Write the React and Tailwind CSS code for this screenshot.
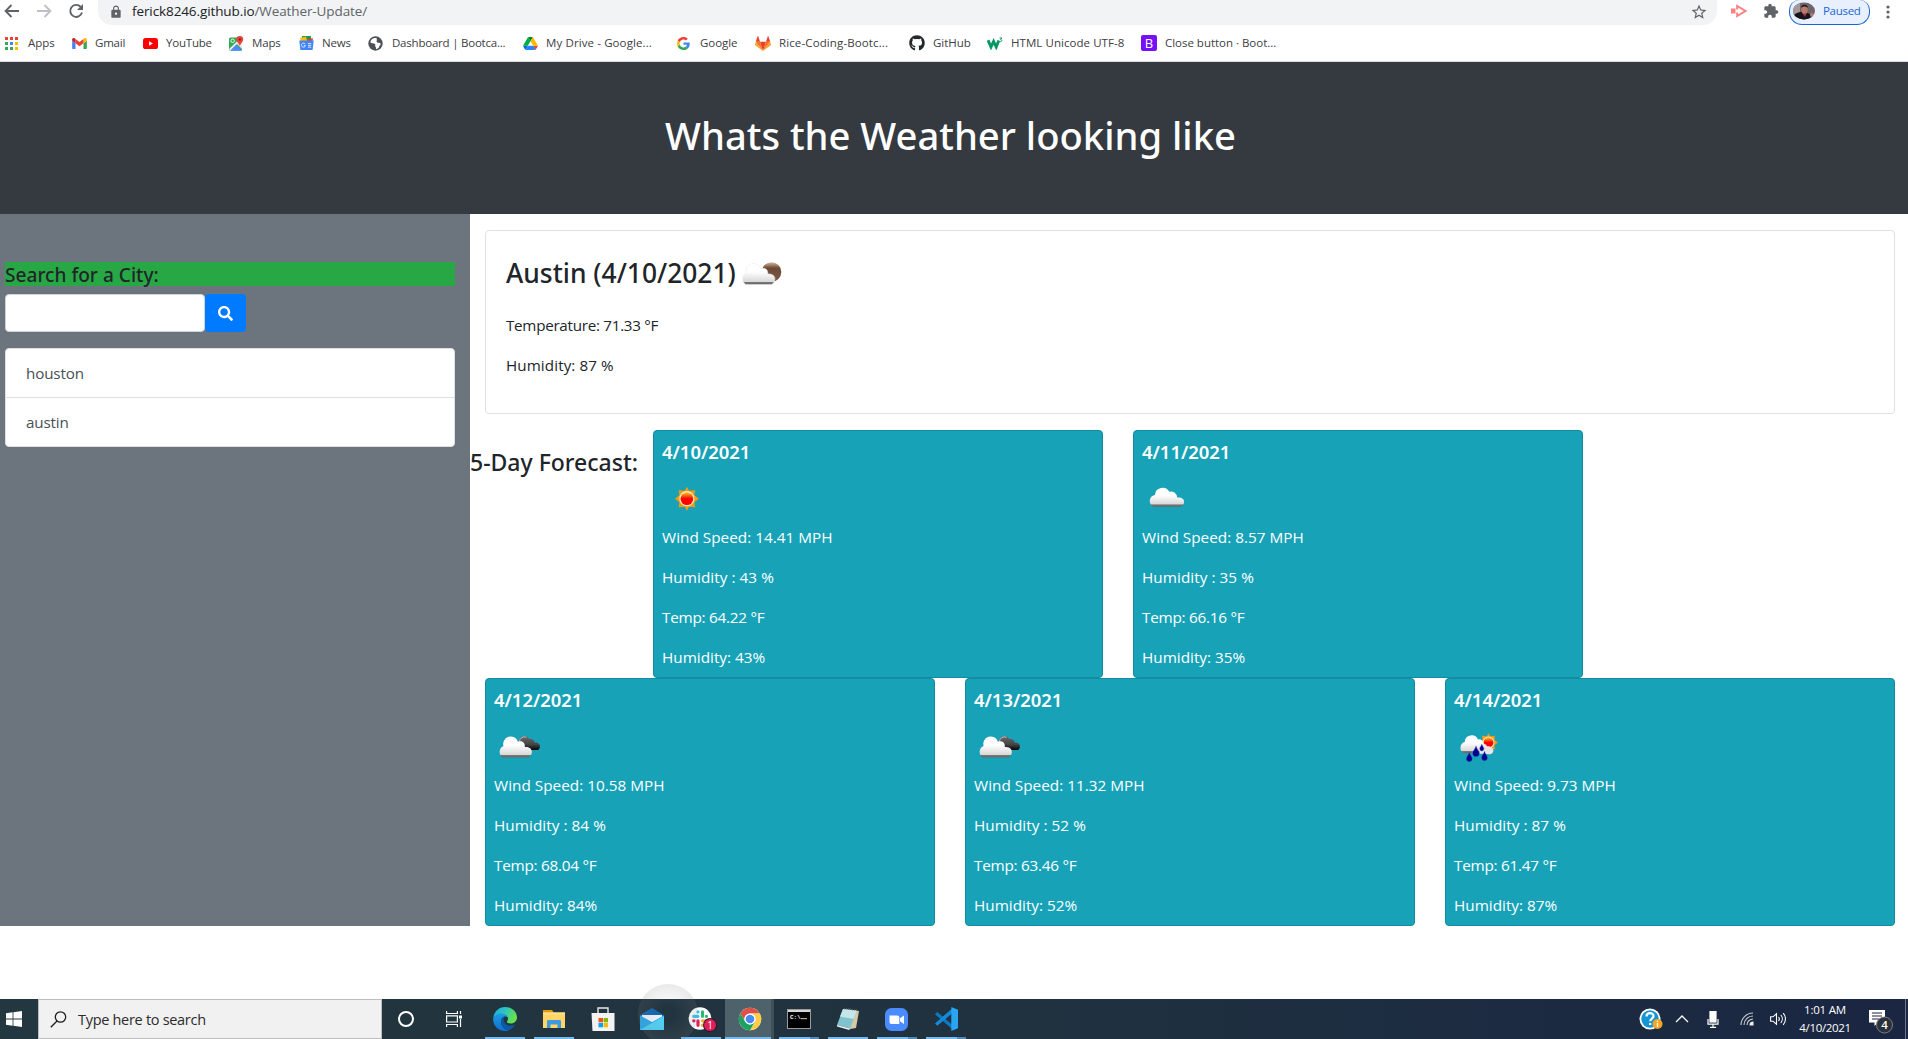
import React from 'react';
import { FaGithub, FaSearch } from 'react-icons/fa';
import { MdExtension, MdLock, MdStarBorder } from 'react-icons/md';

/* ---------- browser icons ---------- */

const AppsIcon = () => (
  <svg viewBox="0 0 13 13" className="h-[13px] w-[13px]">
    {['#ea4335', '#ea4335', '#ea4335', '#34a853', '#4285f4', '#fbbc05', '#34a853', '#34a853', '#fbbc05'].map((c, i) => (
      <rect key={i} x={(i % 3) * 5} y={Math.floor(i / 3) * 5} width="3" height="3" fill={c} />
    ))}
  </svg>
);

const GmailIcon = () => (
  <svg viewBox="52 42 88 66" className="h-[11px] w-[15px]">
    <path fill="#4285f4" d="M58 108h14V74L52 59v43c0 3.32 2.69 6 6 6" />
    <path fill="#34a853" d="M120 108h14c3.32 0 6-2.69 6-6V59l-20 15" />
    <path fill="#fbbc04" d="M120 48v26l20-15v-8c0-7.42-8.47-11.65-14.4-7.2" />
    <path fill="#ea4335" d="M72 74V48l24 18 24-18v26L96 92" />
    <path fill="#c5221f" d="M52 51v8l20 15V48l-5.6-4.2c-5.94-4.45-14.4-.22-14.4 7.2" />
  </svg>
);

const YouTubeIcon = () => (
  <svg viewBox="0 0 15 11" className="h-[11px] w-[15px]">
    <rect width="15" height="11" rx="2.6" fill="#f00" />
    <path d="M6 3.2v4.6l4-2.3z" fill="#fff" />
  </svg>
);

const MapsIcon = () => (
  <svg viewBox="0 0 15 15" className="h-[15px] w-[15px]">
    <rect x="0" y="1.5" width="13" height="13" rx="1.5" fill="#34a853" />
    <path d="M1.5 14.5 7 9l6 5.5z" fill="#4285f4" />
    <path d="M0 13 12 1.5l1 1V13L8 8 1.5 14.5z" fill="#e8eaed" />
    <path d="M1.5 14.5 7.2 8.8 13 14.5z" fill="#4c8bf5" />
    <circle cx="3.6" cy="4.8" r="1.7" fill="none" stroke="#fff" strokeWidth=".9" />
    <path d="M10.8 0a3.4 3.4 0 0 1 3.4 3.5c0 2.3-2.4 3.3-3.4 6.5-1-3.2-3.4-4.2-3.4-6.5A3.4 3.4 0 0 1 10.8 0" fill="#ea4335" />
    <circle cx="10.8" cy="3.4" r="1.2" fill="#8c1d16" />
  </svg>
);

const NewsIcon = () => (
  <svg viewBox="0 0 15 14" className="h-[14px] w-[15px]">
    <path d="M3 0h9v6H3z" fill="#0f9d58" />
    <path d="M1 2l6-1.4L8.5 7 2.5 8z" fill="#fbbc05" />
    <path d="M8 3l6-.8L13 9H8z" fill="#ea4335" />
    <path d="M.3 4.500h14.400L13.600 14H1.400z" fill="#4285f4" />
    <path d="M6.200 8.200A2 2 0 1 0 6.400 9.600H4.800M9 7.600h3.200M9 9.400h3.200M9 11.200h3.200" stroke="#fff" fill="none" strokeWidth=".8" />
  </svg>
);

const GlobeIcon = () => (
  <svg viewBox="0 0 15 15" className="h-[15px] w-[15px]">
    <circle cx="7.5" cy="7.5" r="7.2" fill="#4d5156" />
    <path d="M8.4 2.1c-2.8-.5-5.600 1-6.100 4.200 1.200 1.500 3.400.6 4.600 1.700 1 .9-.2 2 .7 3.100.7.9.4 1.400.3 2.100 1.900-.2 3-1.300 3.300-2.600.3-1.200 1.500-1.600 1.600-2.800-1.300-1.400-2.600-.7-3.700-1.500C7.900 5.400 9.600 4.500 8.400 2.100" fill="#fff" />
    <circle cx="10" cy="5.2" r="1" fill="#4d5156" />
  </svg>
);

const DriveIcon = () => (
  <svg viewBox="0 0 87.3 78" className="h-[13px] w-[15px]">
    <path d="m6.6 66.85 3.85 6.65c.8 1.4 1.95 2.5 3.3 3.3l13.75-23.8h-27.5c0 1.55.4 3.1 1.2 4.5z" fill="#0066da" />
    <path d="m43.65 25-13.75-23.8c-1.35.8-2.5 1.9-3.3 3.3l-25.4 44a9.06 9.06 0 0 0 -1.2 4.5h27.5z" fill="#00ac47" />
    <path d="m73.55 76.8c1.35-.8 2.5-1.9 3.3-3.3l1.6-2.75 7.65-13.25c.8-1.4 1.2-2.95 1.2-4.5h-27.5l5.85 11.5z" fill="#ea4335" />
    <path d="m43.65 25 13.75-23.8c-1.35-.8-2.9-1.2-4.5-1.2h-18.5c-1.6 0-3.15.45-4.5 1.2z" fill="#00832d" />
    <path d="m59.8 53h-32.3l-13.75 23.8c1.35.8 2.9 1.2 4.5 1.2h50.8c1.6 0 3.15-.45 4.5-1.2z" fill="#2684fc" />
    <path d="m73.4 26.5-12.7-22c-.8-1.4-1.95-2.5-3.3-3.3l-13.75 23.8 16.15 28h27.45c0-1.55-.4-3.1-1.2-4.5z" fill="#ffba00" />
  </svg>
);

const GoogleIcon = () => (
  <svg viewBox="0 0 48 48" className="h-[13px] w-[13px]">
    <path fill="#EA4335" d="M24 9.5c3.54 0 6.71 1.22 9.21 3.6l6.85-6.85C35.9 2.38 30.47 0 24 0 14.62 0 6.51 5.38 2.56 13.22l7.98 6.19C12.43 13.72 17.74 9.5 24 9.5z" />
    <path fill="#4285F4" d="M46.98 24.55c0-1.57-.15-3.09-.38-4.55H24v9.02h12.94c-.58 2.96-2.26 5.48-4.78 7.18l7.73 6c4.51-4.18 7.09-10.36 7.09-17.65z" />
    <path fill="#FBBC05" d="M10.53 28.59c-.48-1.45-.76-2.99-.76-4.59s.27-3.14.76-4.59l-7.98-6.19C.92 16.46 0 20.12 0 24c0 3.88.92 7.54 2.56 10.78l7.97-6.19z" />
    <path fill="#34A853" d="M24 48c6.48 0 11.93-2.13 15.89-5.81l-7.73-6c-2.15 1.45-4.92 2.3-8.16 2.3-6.26 0-11.57-4.22-13.47-9.91l-7.98 6.19C6.51 42.62 14.62 48 24 48z" />
  </svg>
);

const GitLabIcon = () => (
  <svg viewBox="0 0 16 15" className="h-[15px] w-[16px]">
    <path d="M8 15 5 5.7h6z" fill="#e24329" />
    <path d="M8 15 5 5.7H.8zM8 15l3-9.3h4.2z" fill="#fc6d26" />
    <path d="M.8 5.7 0 8.5a.7.7 0 0 0 .2.7L8 15zM15.2 5.7l.8 2.8a.7.7 0 0 1-.2.7L8 15z" fill="#fca326" />
    <path d="M.8 5.7H5L3.2.3a.3.3 0 0 0-.6 0zM15.2 5.7H11L12.8.3a.3.3 0 0 1 .6 0z" fill="#e24329" />
  </svg>
);

const W3Icon = () => (
  <svg viewBox="0 0 16 13" className="h-[13px] w-[16px]" fill="none" stroke="#059862">
    <path d="M1 3.2 4 10 6.6 4.5 9.2 10 11.8 3.5" strokeWidth="2.9" />
    <path d="M12.6 1h2.3l-1.300 1.600c1.700.1 1.700 2.300-.9 2" strokeWidth="1" />
  </svg>
);

const BootstrapIcon = () => (
  <span className="flex h-4 w-4 items-center justify-center rounded-[2px] bg-[#7510f7] text-[13px] leading-none text-white">B</span>
);

const bookmarks = [
  { label: 'Apps', Icon: AppsIcon, slot: 'w-[67px]', text: 'ml-[10px] tracking-[-0.05px]' },
  { label: 'Gmail', Icon: GmailIcon, slot: 'w-[71px]', text: 'ml-[8px] tracking-[-0.2px]' },
  { label: 'YouTube', Icon: YouTubeIcon, slot: 'w-[86px]', text: 'ml-[8px] tracking-[-0.2px]' },
  { label: 'Maps', Icon: MapsIcon, slot: 'w-[70px]', text: 'ml-[8px] tracking-[-0.15px]' },
  { label: 'News', Icon: NewsIcon, slot: 'w-[69px]', text: 'ml-[8px] tracking-[-0.15px]' },
  { label: 'Dashboard | Bootca...', Icon: GlobeIcon, slot: 'w-[155px]', text: 'ml-[9px] tracking-[-0.22px]' },
  { label: 'My Drive - Google...', Icon: DriveIcon, slot: 'w-[154px]', text: 'ml-[8px] tracking-[0.11px]' },
  { label: 'Google', Icon: GoogleIcon, slot: 'w-[78px]', text: 'ml-[10px] tracking-[-0.05px]' },
  { label: 'Rice-Coding-Bootc...', Icon: GitLabIcon, slot: 'w-[154px]', text: 'ml-[8px] tracking-[0.12px]' },
  { label: 'GitHub', Icon: () => <FaGithub className="h-4 w-4 text-[#24292e]" />, slot: 'w-[78px]', text: 'ml-[8px] tracking-[-0.05px]' },
  { label: 'HTML Unicode UTF-8', Icon: W3Icon, slot: 'w-[154px]', text: 'ml-[8px] tracking-[0.06px]' },
  { label: 'Close button · Boot...', Icon: BootstrapIcon, slot: 'w-[150px]', text: 'ml-[8px] tracking-[-0.02px]' },
];

function Browser() {
  return (
    <div className="h-[62px] border-b border-[#dadce0] bg-white text-[#3c4043]">
      <div className="flex h-[25px] items-start text-[#5f6368]">
        <svg viewBox="0 0 98 24" className="h-6 w-[98px] shrink-0" fill="none" strokeWidth="1.9">
          <path d="M19 11H6M11.5 5 5.6 11l5.9 6" stroke="#5f6368" />
          <path d="M37 11h13M44.5 5l5.9 6-5.9 6" stroke="#bdc1c6" />
          <path d="M80.7 6.9A6 6 0 1 0 82 12.6" stroke="#5f6368" />
          <path d="M83 4v6h-6z" fill="#5f6368" />
        </svg>
        <div className="flex h-[25px] flex-1 items-center rounded-b-[14px] bg-[#f1f3f4] pb-[2px] pl-[11px] pr-[9px]">
          <MdLock className="h-[14px] w-[14px]" />
          <span className="ml-[9px] text-[13.5px] leading-none tracking-[-0.1px]">
            <span className="text-[#202124]">ferick8246.github.io</span>/Weather-Update/
          </span>
          <MdStarBorder className="ml-auto h-[18px] w-[18px]" />
        </div>
        <div className="flex h-[25px] w-[191px] items-start">
          <svg viewBox="0 0 17 14" className="ml-[14px] mt-1 h-[14px] w-[17px]">
            <rect x="0" y="4.5" width="4.5" height="5" fill="#f88080" />
            <path d="M6.200 5.500V2L14.500 7 6.200 12V8.500" fill="none" stroke="#f88080" strokeWidth="2" />
          </svg>
          <MdExtension className="ml-[15px] mt-[3px] h-4 w-4" />
          <div className="ml-[10px] flex h-[25px] w-[81px] items-center rounded-b-[13px] rounded-t-[10px] border border-t-0 border-[#1967d2] bg-[#e8f0fe] pb-[3px] pl-[3px]">
            <svg viewBox="0 0 22 18" className="h-[18px] w-[22px]">
              <clipPath id="face"><ellipse cx="11" cy="9" rx="11" ry="8.500" /></clipPath>
              <g clipPath="url(#face)">
                <rect width="22" height="18" fill="#6f6468" />
                <rect width="7" height="12" fill="#a3989a" />
                <path d="M0 18c0-6 4-8 9-8s10 2 13 8z" fill="#17151b" />
                <path d="M9 11h5l-2 4z" fill="#9a3344" />
                <ellipse cx="11.5" cy="7.500" rx="3.200" ry="4.200" fill="#b87968" />
                <path d="M8 6c0-4.500 7-4.500 7 0-2-2-5-2-7 0" fill="#1d1718" />
                <circle cx="19" cy="13" r="2" fill="#b87968" />
              </g>
            </svg>
            <span className="ml-[8px] text-[11.5px] tracking-[-0.3px] text-[#1967d2]">Paused</span>
          </div>
          <svg viewBox="0 0 4 14" className="ml-[16px] mt-[5px] h-[14px] w-1" fill="#5f6368">
            <circle cx="2" cy="2" r="1.6" /><circle cx="2" cy="7" r="1.6" /><circle cx="2" cy="12" r="1.6" />
          </svg>
        </div>
      </div>
      <div className="flex h-[36px] items-center pl-[5px] text-[11.5px]">
        {bookmarks.map(({ label, Icon, slot, text }) => (
          <div key={label} className={`flex h-5 shrink-0 items-center whitespace-nowrap ${slot}`}>
            <Icon />
            <span className={text}>{label}</span>
          </div>
        ))}
      </div>
    </div>
  );
}

/* ---------- weather icons ---------- */

const Defs = () => (
  <svg className="absolute h-0 w-0" aria-hidden="true">
    <defs>
      <linearGradient id="white" x1="0" y1="0" x2="0" y2="1">
        <stop offset="0.4" stopColor="#fff" /><stop offset="0.86" stopColor="#d9d9d9" />
        <stop offset="0.9" stopColor="#777" /><stop offset="1" stopColor="#666" />
      </linearGradient>
      <linearGradient id="dark" x1="0" y1="0" x2="0" y2="1">
        <stop offset="0" stopColor="#6a6a6a" /><stop offset="0.6" stopColor="#444" /><stop offset="1" stopColor="#050505" />
      </linearGradient>
      <linearGradient id="moon" x1="0" y1="0" x2="0" y2="1">
        <stop offset="0" stopColor="#d8b9a0" /><stop offset="0.3" stopColor="#6b4a35" /><stop offset="1" stopColor="#7b5c48" />
      </linearGradient>
      <linearGradient id="sun" x1="0" y1="0" x2="0" y2="1">
        <stop offset="0.1" stopColor="#ffa21a" /><stop offset="0.5" stopColor="#f00" />
      </linearGradient>
    </defs>
  </svg>
);

const Icon50 = ({ children }) => <svg viewBox="0 0 50 50" className="block h-[50px] w-[50px] shrink-0">{children}</svg>;

const SunShape = () => (
  <>
    <path d="m0-12 2.200 4L8.300-8.500 7.500-3.500 12 0 7.500 3.500 8.300 8.500 2.200 8 0 12-2.200 8-8.300 8.500-7.500 3.500-12 0-7.500-3.500-8.300-8.500-2.200-8z" fill="#f79a10" />
    <circle r="7.6" fill="#fde8b5" />
    <circle r="6.3" fill="url(#sun)" />
  </>
);

const Sun = () => <Icon50><g transform="translate(24.900 25.700)"><SunShape /></g></Icon50>;

const Cloud = () => (
  <Icon50>
    <path d="M11.500 33.700a6.200 6.200 0 0 1 1.400-11.800 7.700 7.700 0 0 1 14.400-3.200 6.200 6.200 0 0 1 7.900 5.900c3.500-.7 7.100 1 6.900 4.300-.2 2.600-1.600 3.900-3.300 4.800z" fill="url(#white)" />
  </Icon50>
);

const FRONT_CLOUD = 'M8.800 36.500a6.400 6.400 0 0 1 .7-11.400 7.300 7.300 0 0 1 14.400-4.300c5.200-1.800 7.300 2 6.900 5.200 5.500-.6 7.600 3 7 5.800-.4 2.500-1.700 3.800-3.300 4.700z';

const BrokenClouds = () => (
  <Icon50>
    <path d="M25.500 22a5.300 5.300 0 0 1 9.800-3.900c3.300-.8 5 1 5.200 3.500 3.200-.4 5.800 1.400 5.400 4.400-.3 2-1 2.500-2 3H29z" fill="url(#dark)" />
    <path d="M25.500 21.500a5 5 0 0 1 7-5.200" stroke="#bbb" strokeWidth="1" fill="none" />
    <path d={FRONT_CLOUD} fill="url(#white)" />
  </Icon50>
);

const CloudyNight = () => (
  <Icon50>
    <circle cx="34.500" cy="24" r="9.800" fill="url(#moon)" />
    <path d={FRONT_CLOUD} fill="url(#white)" stroke="#e8e8e8" strokeWidth=".5" />
  </Icon50>
);

const Drop = ({ x, y, s = 1 }) => (
  <path transform={`translate(${x} ${y}) scale(${s})`} d="M0 0C.6 2.500 2.800 4 2.800 6.200a2.800 2.800 0 0 1-5.600 0C-2.800 4-.6 2.500 0 0" fill="#00008f" stroke="#1e2fbb" strokeWidth=".4" />
);

const SunRain = () => (
  <Icon50>
    <g transform="translate(34.500 21.500) scale(.78)"><SunShape /></g>
    <path d="M22 32.500c-1-4 .6-6.200 3-6.600 1-4 6.500-4.500 8-.7 4-.3 6.500 2 6.400 4.600-.2 2-1.500 3-3 3.400z" fill="#e6e6e6" />
    <path d="M10 32.300a6 6 0 0 1 .7-11.200 6.900 6.900 0 0 1 13.200-2.600 4.500 4.500 0 0 1 5.700 4.300c-3 1.500-5 5-4 9.500z" fill="url(#white)" />
    <Drop x={15.300} y={31.500} /><Drop x={22} y={25.200} s={1.150} /><Drop x={27.800} y={23.200} s={0.750} /><Drop x={30.500} y={30.500} />
  </Icon50>
);

/* ---------- page ---------- */

const days = [
  { date: '4/10/2021', Icon: Sun, wind: '14.41', humidity: 43, temp: '64.22' },
  { date: '4/11/2021', Icon: Cloud, wind: '8.57', humidity: 35, temp: '66.16' },
  { date: '4/12/2021', Icon: BrokenClouds, wind: '10.58', humidity: 84, temp: '68.04' },
  { date: '4/13/2021', Icon: BrokenClouds, wind: '11.32', humidity: 52, temp: '63.46' },
  { date: '4/14/2021', Icon: SunRain, wind: '9.73', humidity: 87, temp: '61.47' },
];

function DayCard({ date, Icon, wind, humidity, temp }) {
  return (
    <div className="h-[248px] w-[450px] shrink-0 rounded border border-[#138ba0] bg-[#17a2b8] px-2 pt-[9px] text-[15.3px] leading-6 text-white">
      <h5 className="mb-[9px] font-['Noto_Sans'] text-[18.4px] font-semibold leading-6">{date}</h5>
      <Icon />
      <div className="mt-[2px] flex flex-col gap-4">
        <p className="tracking-[0.02px]">Wind Speed: {wind} MPH</p>
        <p className="tracking-[0.05px]">Humidity : {humidity} %</p>
        <p className="tracking-[-0.25px]">Temp: {temp} °F</p>
        <p>Humidity: {humidity}%</p>
      </div>
    </div>
  );
}

function Sidebar() {
  return (
    <aside className="w-[470px] shrink-0 bg-[#6c757d] pl-[5px] pr-[15px] pt-12">
      <h5 className="h-6 bg-[#28a745] font-['Noto_Sans'] text-[19.1px] font-medium leading-[27px] text-[#212529]">Search for a City:</h5>
      <div className="mt-2 flex">
        <input className="h-[38px] w-[200px] rounded border border-[#ced4da] bg-white px-3 outline-none" />
        <button className="flex h-[38px] w-[41px] items-center justify-center rounded bg-[#007bff] text-white">
          <FaSearch className="h-[15px] w-[15px]" />
        </button>
      </div>
      <ul className="mt-4 rounded border border-[#dfdfdf] bg-white text-[15.2px] tracking-[-0.15px] text-[#495057]">
        <li className="h-[49px] border-b border-[#dfdfdf] px-5 leading-[49px]">houston</li>
        <li className="h-12 px-5 leading-[49px]">austin</li>
      </ul>
    </aside>
  );
}

/* ---------- taskbar ---------- */

const EdgeIcon = () => (
  <svg viewBox="0 0 24 24" className="h-6 w-6">
    <defs>
      <linearGradient id="e1" x1="0" y1="0" x2="1" y2=".4"><stop offset="0" stopColor="#1ea7e8" /><stop offset=".5" stopColor="#2ec4c0" /><stop offset="1" stopColor="#66e04c" /></linearGradient>
      <linearGradient id="e2" x1="0" y1="0" x2="0" y2="1"><stop offset="0" stopColor="#1b9de2" /><stop offset="1" stopColor="#0f6fd0" /></linearGradient>
    </defs>
    <path d="M.2 11C1 4.500 6 0 12 0c7 0 12 5 12 10.500 0 3.500-2.800 6-6 6-2.500 0-4.200-.8-4.200-1.800 0-.7 1.200-1 1.200-3 0-2.200-2.500-4.200-6-4.200C5 7.500 1.500 9 .2 11" fill="url(#e1)" />
    <path d="M.1 12C.5 9 4 6.500 8.500 6.500c2.800 0 5.500 1.200 6.200 3.500C11 8.500 8 11 8 14.500c0 4.500 3.500 8 7.500 8.900-1 .4-2.200.6-3.500.6C5 24 0 18.500.1 12" fill="url(#e2)" />
    <path d="M8 14.500c0-2.700 1.500-4.500 3.500-5-.6 1.200-.8 2-.8 3.200 0 3.500 3.300 5.900 7 5.900 2 0 3.500-.5 4.600-1-1.500 3-4 5-6.800 5.800-4 0-7.500-4.400-7.500-8.900" fill="#0c59a4" />
  </svg>
);

const ExplorerIcon = () => (
  <svg viewBox="0 0 22 19" className="h-[19px] w-[22px]">
    <path d="M0 0h9l2 3H0z" fill="#e39b10" />
    <path d="M0 2.500h22V18H0z" fill="#ffd567" />
    <path d="M0 2.500h22v2H0z" fill="#ffe08a" />
    <path d="M4 18v-6.500c0-1 .6-1.500 1.500-1.500h11c.9 0 1.500.5 1.500 1.500V18h-3.500v-3.500h-7V18z" fill="#3c9be0" />
  </svg>
);

const StoreIcon = () => (
  <svg viewBox="0 0 24 24" className="h-6 w-6">
    <path d="M7 7V1h10v6" fill="none" stroke="#e8e8e8" strokeWidth="1.4" />
    <path d="M.5 6h23v18H1.500z" fill="#f3f3f3" />
    <path d="M7.500 11H12v4.300H7.500z" fill="#f25022" /><path d="M12.600 11H17v4.300h-4.400z" fill="#7fba00" />
    <path d="M7.500 16H12v4.300H7.500z" fill="#00a4ef" /><path d="M12.600 16H17v4.300h-4.400z" fill="#ffb900" />
  </svg>
);

const MailIcon = () => (
  <svg viewBox="0 0 24 22" className="h-[22px] w-6">
    <path d="M0 7 12 0l12 7v5H0z" fill="#1266b2" />
    <path d="M2 7h20v6l-10 6L2 13z" fill="#eef4fa" />
    <path d="M0 7.500 12 14l12-6.500V22H0z" fill="#28a8ea" />
    <path d="M0 22 24 8v14z" fill="#50d0f4" />
  </svg>
);

const SlackIcon = () => (
  <svg viewBox="0 0 24 24" className="h-6 w-6 overflow-visible">
    <circle cx="11" cy="11.500" r="11.300" fill="#fff" />
    <g strokeWidth="3.200" strokeLinecap="round">
      <path d="M9 4.800v.2M4.700 9.300H9" stroke="#36c5f0" />
      <path d="M13.500 4.800v4.500M17.500 9.300h-.2" stroke="#2eb67d" />
      <path d="M9 13.800v4.500M4.700 13.800h.3" stroke="#e01e5a" />
      <path d="M13.500 13.800h4.200M13.500 18.200v.1" stroke="#ecb22e" />
    </g>
    <circle cx="21" cy="18" r="7" fill="#3c1428" /><circle cx="21" cy="18" r="6" fill="#e01e5a" />
    <text x="21" y="21.500" textAnchor="middle" fontSize="10" fill="#fff" fontFamily="Open Sans, sans-serif">1</text>
  </svg>
);

const ChromeIcon = () => (
  <svg viewBox="0 0 24 24" className="h-6 w-6">
    <circle cx="12" cy="12" r="11.200" fill="#fff" />
    <path d="M2.300 6.400A11.200 11.200 0 0 1 21.700 6.400H12A5.600 5.600 0 0 0 7.100 14.800z" fill="#de5246" />
    <path d="M21.700 6.400A11.200 11.200 0 0 1 12 23.200l4.900-8.400A5.600 5.600 0 0 0 12 6.400z" fill="#ffce44" />
    <path d="M12 23.200A11.200 11.200 0 0 1 2.300 6.400l4.850 8.400a5.600 5.600 0 0 0 9.700 0z" fill="#1aa260" />
    <circle cx="12" cy="12" r="5.400" fill="#fff" /><circle cx="12" cy="12" r="4.300" fill="#4a8af4" />
  </svg>
);

const TerminalIcon = () => (
  <svg viewBox="0 0 24 20" className="h-5 w-6">
    <rect x=".5" y=".5" width="23" height="19" fill="#000" stroke="#9a9a9a" />
    <rect x="1" y="1" width="22" height="2" fill="#d8d8d8" />
    <text x="3" y="10" fontSize="6" fontWeight="700" fill="#fff" fontFamily="Liberation Mono, monospace">C:\</text>
    <path d="M14 9.700h6" stroke="#fff" strokeWidth=".8" />
  </svg>
);

const NotepadIcon = () => (
  <svg viewBox="0 0 24 24" className="h-6 w-6">
    <path d="M8 2 23 4l-3 17-6 1z" fill="#d6c9a5" />
    <path d="M7 2 21 3.500 14 21.500 1 18z" fill="#7fc3cf" />
    <path d="M7 2 21 3.500 17.500 12 4 9.500z" fill="#c4e6ea" />
    <path d="M1 18l13 3.500-.6 1.500L1 19.500z" fill="#f4f4f4" />
    <path d="M8 1.500 21 3" stroke="#555" strokeWidth="1.500" strokeDasharray="1 1" />
  </svg>
);

const ZoomIcon = () => (
  <svg viewBox="0 0 23 23" className="h-[23px] w-[23px]">
    <rect width="23" height="23" rx="6.500" fill="#4a8cff" />
    <path d="M4.500 7.500h7.800c1.200 0 2 .8 2 2V16H6.500c-1.200 0-2-.8-2-2zM15 10.200l4-2.700V16l-4-2.700z" fill="#fff" />
  </svg>
);

const CodeIcon = () => (
  <svg viewBox="0 0 24 24" className="h-6 w-6">
    <path d="M1.500 7.200 17.500 21 18 18 3.300 5.500z" fill="#0a7bc4" stroke="#0a7bc4" strokeWidth="1" />
    <path d="M1.500 16.500 17.500 2.500 18 6 3.300 18.300z" fill="#1489d8" stroke="#1489d8" strokeWidth="1" />
    <path d="M17.300 0 24 2.800v18.400L17.300 24z" fill="#2aa5f2" />
  </svg>
);

const tasks = [
  { Icon: EdgeIcon, running: true },
  { Icon: ExplorerIcon, running: true },
  { Icon: StoreIcon },
  { Icon: MailIcon },
  { Icon: SlackIcon, running: true },
  { Icon: ChromeIcon, running: true, active: true },
  { Icon: TerminalIcon, running: true, stacked: true },
  { Icon: NotepadIcon, running: true },
  { Icon: ZoomIcon, running: true, stacked: true },
  { Icon: CodeIcon, running: true, stacked: true },
];

function Taskbar() {
  return (
    <div className="relative flex h-10 bg-gradient-to-r from-[#22373f] via-[#20323f] to-[#1a2642] text-white">
      <div className="flex w-[38px] items-center pl-[6px]">
        <svg viewBox="0 0 16 16" className="h-4 w-4" fill="#fff"><path d="M0 2.200 6.600 1.300v6.300H0zM7.400 1.200 16 0v7.600H7.400zM0 8.400h6.600v6.300L0 13.800zM7.400 8.400H16V16l-8.600-1.200z" /></svg>
      </div>
      <div className="flex w-[344px] items-center border border-[#bdbdbd] bg-[#f1f1f1] text-[#2b2b2b]">
        <svg viewBox="0 0 17 17" className="ml-[11px] h-[17px] w-[17px]" fill="none" stroke="#1d1d1d" strokeWidth="1.3"><circle cx="10.5" cy="6" r="5.2" /><path d="M7 10 .8 16.2" /></svg>
        <span className="ml-[11px] pt-px text-[14.5px] tracking-[-0.3px]">Type here to search</span>
      </div>
      <div className="flex w-12 items-center justify-center"><span className="h-4 w-4 rounded-full border-2 border-white" /></div>
      <div className="flex w-12 items-center justify-center">
        <svg viewBox="0 0 16 16" className="h-4 w-4" fill="none" stroke="#fff" strokeWidth="1.2"><path d="M.6 0v2.500h10.800V0M.6 16v-2.500h10.800V16M.6 4.800h10.800v6.200H.6zM14.500 0v3M14.500 8v8" /><path d="M13 4.500h3v3h-3z" fill="#fff" stroke="none" /></svg>
      </div>
      <div className="flex pl-[2px]">
        {tasks.map(({ Icon, running, active, stacked }, i) => (
          <div key={i} className={`relative flex h-10 w-[49px] items-center justify-center ${active ? 'border-r-[3px] border-[#3d515a] bg-[#4d626b] pl-1' : ''}`}>
            <Icon />
            {running && (
              <div className={`absolute bottom-0 flex h-[2px] ${active ? 'inset-x-0' : 'left-[5px] right-1'}`}>
                <div className="flex-1 bg-[#76b9ed]" />
                {stacked && <div className="w-[9px] bg-[#5589b0]" />}
              </div>
            )}
          </div>
        ))}
      </div>
      <span className="pointer-events-none absolute left-[638px] top-[-15px] h-[55px] w-[60px] overflow-hidden">
        <span className="block h-[60px] w-[60px] rounded-full bg-[radial-gradient(circle,rgba(130,130,130,0)_15%,rgba(130,130,130,0.22)_85%)]" />
      </span>
      <div className="ml-auto flex items-center">
        <svg viewBox="0 0 24 22" className="h-[22px] w-6">
          <circle cx="11" cy="11" r="10.5" fill="#fff" /><circle cx="11" cy="11" r="8.7" fill="#1496d6" />
          <path d="M7.500 8.500c0-4.500 7-4.300 7-.5 0 2.700-3.300 2.500-3.300 5.300M11.200 15v2" stroke="#fff" strokeWidth="2.2" fill="none" />
          <circle cx="18.5" cy="16" r="5" fill="#f5a623" /><path d="M18.500 15v4M18.500 12.800v1.200" stroke="#fff" strokeWidth="1.3" />
        </svg>
        <svg viewBox="0 0 14 8" className="ml-[12px] h-2 w-[14px]" fill="none" stroke="#fff" strokeWidth="1.3"><path d="m1 7 6-6 6 6" /></svg>
        <svg viewBox="0 0 12 17" className="ml-[18px] h-[17px] w-3" fill="none" stroke="#fff" strokeWidth="1.2"><rect x="3" y=".5" width="6" height="10.5" fill="#fff" /><path d="M1 8v5.200h10V8M6 13v3M3 16.300h6" /></svg>
        <svg viewBox="0 0 14 14" className="ml-[21px] h-[14px] w-[14px]" fill="none" stroke="#e8e8e8" strokeWidth="1.1"><path d="M1 13A12 12 0 0 1 13 1M4 13a9 9 0 0 1 9-9M7 13a6 6 0 0 1 6-6" opacity=".85" /><path d="M10 13a3 3 0 0 1 3-3v3z" fill="#fff" /></svg>
        <svg viewBox="0 0 17 14" className="ml-4 h-[14px] w-[17px]" fill="none" stroke="#fff" strokeWidth="1.1"><path d="M.6 4.800H3l3.500-3v10.400L3 9.200H.6zM8.500 5c1 1.200 1 2.800 0 4M10.800 3c2 2.300 2 5.700 0 8M13.200 1.200c3 3.300 3 8.300 0 11.600" /></svg>
        <div className="ml-[10px] w-[56px] text-center text-[11.5px] leading-[18px]">
          <div className="tracking-[-0.2px]">1:01 AM</div>
          <div className="tracking-[-0.35px]">4/10/2021</div>
        </div>
        <svg viewBox="0 0 25 26" className="ml-4 mt-1 h-[26px] w-[25px]">
          <path d="M0 2h16v12.500H9L5.500 18v-3.500H0z" fill="#fff" />
          <path d="M3 5h10M3 8h10M3 11h7" stroke="#1a2642" strokeWidth="1.2" />
          <circle cx="15.5" cy="17" r="8" fill="#2c3038" stroke="#777d86" strokeWidth="1" />
          <text x="15.5" y="21" textAnchor="middle" fontSize="11.5" fontWeight="600" fill="#fff" fontFamily="Open Sans, sans-serif">4</text>
        </svg>
        <div className="ml-[11px] mr-[2px] h-10 w-px bg-[#6f7889]" />
      </div>
    </div>
  );
}

export default function App() {
  return (
    <div className="flex h-[1039px] w-[1908px] flex-col overflow-hidden bg-white font-['Open_Sans',sans-serif] text-[#212529]">
      <Defs />
      <Browser />
      <header className="flex h-[152px] shrink-0 items-center justify-center bg-[#343a40] pb-[6px] pr-[7px]">
        <h1 className="font-['Noto_Sans'] text-[38.2px] font-medium leading-[48px] text-white">Whats the Weather looking like</h1>
      </header>
      <div className="flex h-[712px] shrink-0">
        <Sidebar />
        <main className="flex-1">
          <section className="mb-4 ml-[15px] mr-[13px] mt-4 h-[184px] rounded border border-[#dee2e6] px-5 pt-[17px]">
            <h3 className="flex h-[50px] items-center gap-px font-['Noto_Sans'] text-[26.4px] font-medium">
              <span className="pt-[2px]">Austin (4/10/2021)</span>
              <CloudyNight />
            </h3>
            <div className="mt-[15px] flex flex-col gap-4 text-[15.2px] leading-6">
              <p className="tracking-[-0.27px]">Temperature: 71.33 °F</p>
              <p className="tracking-[0.1px]">Humidity: 87 %</p>
            </div>
          </section>
          <div className="flex">
            <h4 className="w-[183px] whitespace-nowrap pt-[17px] font-['Noto_Sans'] text-[23px] font-medium leading-[30px]">5-Day Forecast:</h4>
            <div className="flex gap-[30px]">{days.slice(0, 2).map((d) => <DayCard key={d.date} {...d} />)}</div>
          </div>
          <div className="ml-[15px] flex gap-[30px]">{days.slice(2).map((d) => <DayCard key={d.date} {...d} />)}</div>
        </main>
      </div>
      <div className="h-[73px] shrink-0" />
      <Taskbar />
    </div>
  );
}
